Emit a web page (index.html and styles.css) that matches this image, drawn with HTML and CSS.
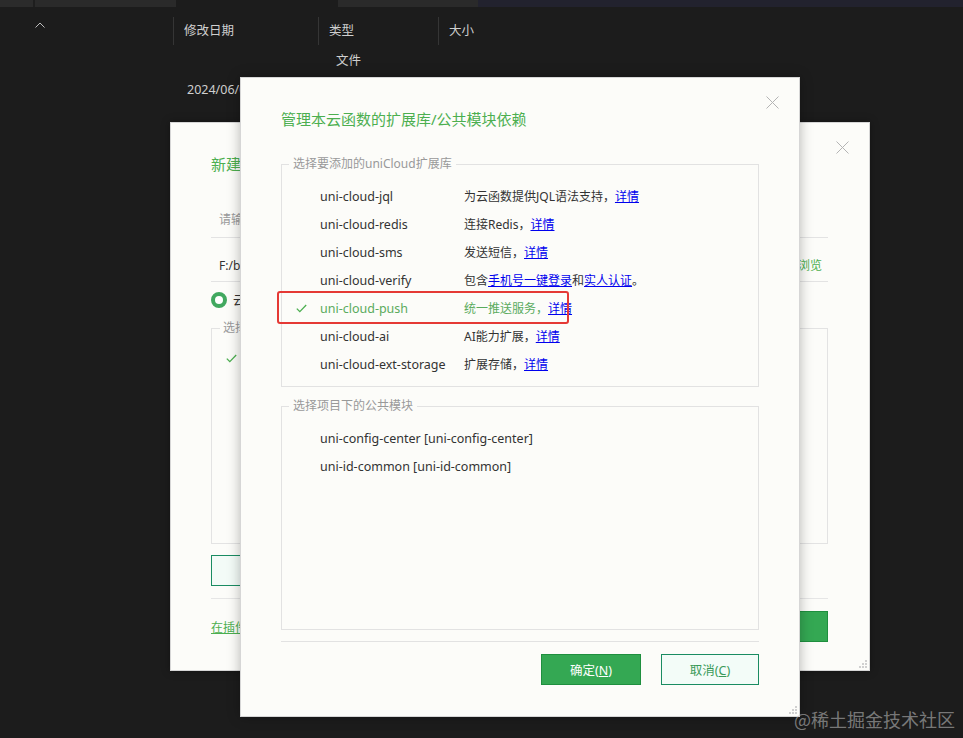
FILE: index.html
```html
<!DOCTYPE html>
<html lang="zh-CN">
<head>
<meta charset="utf-8">
<title>管理本云函数的扩展库/公共模块依赖</title>
<link rel="stylesheet" href="styles.css">
</head>
<body>
<div class="explorer">
  <div class="topbar">
    <span class="seg s1"></span><span class="seg s2"></span><span class="seg s3"></span><span class="seg s4"></span><span class="seg s5"></span>
  </div>
  <div class="colhead">
    <div class="caret-cell">
      <svg class="caret" width="10" height="6" viewBox="0 0 10 6"><polyline points="0.5,5.5 5,1 9.5,5.5" fill="none" stroke="#bdbdbd" stroke-width="1"/></svg>
    </div>
    <div class="col c-date">修改日期</div>
    <div class="col c-type">类型</div>
    <div class="col c-size">大小</div>
  </div>
  <div class="frow first">
    <div class="fcell f-name"></div>
    <div class="fcell f-date"></div>
    <div class="fcell f-type">文件</div>
  </div>
  <div class="frow">
    <div class="fcell f-name"></div>
    <div class="fcell f-date">2024/06/05 10:21</div>
    <div class="fcell f-type">文件夹</div>
  </div>
</div>

<div class="window back">
  <div class="w-title">新建云函数/云对象</div>
  <div class="w-close"><svg width="13" height="13" viewBox="0 0 13 13"><path d="M0.5 0.5L12.5 12.5M12.5 0.5L0.5 12.5" stroke="#b4b4b4" stroke-width="1"/></svg></div>
  <div class="b-input">请输入云函数名称</div>
  <div class="b-path"><span>F:/base/uniCloud-aliyun/cloudfunctions</span><span class="b-browse">浏览</span></div>
  <div class="b-radio"><span class="radio"></span><span>云函数</span></div>
  <fieldset class="b-field">
    <legend>选择要添加的uniCloud扩展库</legend>
    <div class="b-check"><svg width="11" height="9" viewBox="0 0 11 9"><polyline points="0.8,4.6 3.8,7.6 10.2,1" fill="none" stroke="#4caf50" stroke-width="1.3"/></svg></div>
  </fieldset>
  <div class="b-btnrow"><span class="b-outline"></span></div>
  <div class="b-sep"></div>
  <div class="b-foot"><span class="b-link">在插件市场下载云函数模板</span><span class="b-ok">创建</span></div>
  <svg class="grip" width="8" height="8" viewBox="0 0 8 8"><rect x="6" y="0" width="2" height="2" fill="#d0d0d0"/><rect x="3" y="3" width="2" height="2" fill="#d0d0d0"/><rect x="6" y="3" width="2" height="2" fill="#d0d0d0"/><rect x="0" y="6" width="2" height="2" fill="#d0d0d0"/><rect x="3" y="6" width="2" height="2" fill="#d0d0d0"/><rect x="6" y="6" width="2" height="2" fill="#d0d0d0"/></svg>
</div>

<div class="window front">
  <div class="w-title">管理本云函数的扩展库/公共模块依赖</div>
  <div class="w-close"><svg width="13" height="13" viewBox="0 0 13 13"><path d="M0.5 0.5L12.5 12.5M12.5 0.5L0.5 12.5" stroke="#b4b4b4" stroke-width="1"/></svg></div>

  <fieldset class="group g1">
    <legend>选择要添加的uniCloud扩展库</legend>
    <div class="rows">
      <div class="row"><span class="chk"></span><span class="name">uni-cloud-jql</span><span class="desc">为云函数提供JQL语法支持，<a class="lk">详情</a></span></div>
      <div class="row"><span class="chk"></span><span class="name">uni-cloud-redis</span><span class="desc">连接Redis，<a class="lk">详情</a></span></div>
      <div class="row"><span class="chk"></span><span class="name">uni-cloud-sms</span><span class="desc">发送短信，<a class="lk">详情</a></span></div>
      <div class="row"><span class="chk"></span><span class="name">uni-cloud-verify</span><span class="desc">包含<a class="lk">手机号一键登录</a>和<a class="lk">实人认证</a>。</span></div>
      <div class="row on">
        <span class="chk"><svg width="11" height="9" viewBox="0 0 11 9"><polyline points="0.8,4.6 3.8,7.6 10.2,1" fill="none" stroke="#4caf50" stroke-width="1.3"/></svg></span>
        <span class="name">uni-cloud-push</span><span class="desc">统一推送服务，<a class="lk">详情</a></span>
        <span class="mark"></span>
      </div>
      <div class="row"><span class="chk"></span><span class="name">uni-cloud-ai</span><span class="desc">AI能力扩展，<a class="lk">详情</a></span></div>
      <div class="row"><span class="chk"></span><span class="name">uni-cloud-ext-storage</span><span class="desc">扩展存储，<a class="lk">详情</a></span></div>
    </div>
  </fieldset>

  <fieldset class="group g2">
    <legend>选择项目下的公共模块</legend>
    <div class="rows tall">
      <div class="row"><span class="chk"></span><span class="name wide">uni-config-center [uni-config-center]</span></div>
      <div class="row"><span class="chk"></span><span class="name wide">uni-id-common [uni-id-common]</span></div>
    </div>
  </fieldset>

  <div class="sep"></div>
  <div class="btns">
    <button class="btn ok">确定(<u>N</u>)</button>
    <button class="btn cancel">取消(<u>C</u>)</button>
  </div>
  <svg class="grip" width="8" height="8" viewBox="0 0 8 8"><rect x="6" y="0" width="2" height="2" fill="#d0d0d0"/><rect x="3" y="3" width="2" height="2" fill="#d0d0d0"/><rect x="6" y="3" width="2" height="2" fill="#d0d0d0"/><rect x="0" y="6" width="2" height="2" fill="#d0d0d0"/><rect x="3" y="6" width="2" height="2" fill="#d0d0d0"/><rect x="6" y="6" width="2" height="2" fill="#d0d0d0"/></svg>
</div>

<div class="watermark">@稀土掘金技术社区</div>
</body>
</html>
```
FILE: styles.css
```css
html, body {
  margin: 0;
  padding: 0;
}
body {
  width: 963px;
  height: 738px;
  overflow: hidden;
  position: relative;
  background: #1c1c1c;
  font-family: "Noto Sans", "Noto Sans CJK SC", sans-serif;
  font-size: 12px;
  color: #333;
}

/* ---------- explorer background ---------- */
.explorer {
  color: #cfcfcf;
}
.topbar {
  display: flex;
  height: 7px;
  background: #22222e;
}
.seg { display: block; height: 7px; }
.s1 { width: 33px; background: #2b2b2b; }
.s2 { width: 2px; background: #1e1e1e; }
.s3 { width: 141px; background: #2a2a2a; }
.s4 { width: 162px; background: #1c1c1c; }
.s5 { width: 140px; background: #2a2a2a; }

.colhead {
  display: flex;
  padding-top: 10px;
  height: 28px;
}
.caret-cell {
  width: 173px;
}
.caret {
  display: block;
  margin: 5px 0 0 35px;
}
.col {
  border-left: 1px solid #353535;
  height: 28px;
  line-height: 28px;
  padding-left: 10px;
  box-sizing: border-box;
  font-size: 12.5px;
}
.c-date { width: 145px; }
.c-type { width: 120px; }
.c-size { width: 120px; }

.frow {
  display: flex;
  height: 30px;
  line-height: 30px;
  font-size: 12.5px;
}
.frow.first {
  margin-top: 2px;
  height: 28px;
  line-height: 28px;
}
.f-name { width: 187px; }
.f-date { width: 149px; }
.f-type { width: 120px; }

/* ---------- windows ---------- */
.window {
  position: absolute;
  box-sizing: border-box;
  background: #fcfcf9;
  border: 1px solid #d6d6d6;
}
.w-title {
  font-size: 15px;
  line-height: 20px;
  color: #4caf50;
}
.w-close {
  position: absolute;
  top: 18px;
  right: 20px;
  width: 13px;
  height: 13px;
}
.w-close svg { display: block; }
.grip {
  position: absolute;
  right: 2px;
  bottom: 2px;
}

/* back window */
.back {
  left: 170px;
  top: 122px;
  width: 700px;
  height: 549px;
  padding: 31px 41px 0 40px;
  box-shadow: 0 0 8px rgba(0,0,0,0.35);
}
.b-input {
  margin-top: 28px;
  height: 35px;
  line-height: 35px;
  padding-left: 8px;
  color: #999;
  border-bottom: 1px solid #e3e3e3;
}
.b-path {
  display: flex;
  justify-content: space-between;
  padding: 18px 6px 5px 8px;
  line-height: 20px;
  color: #333;
  border-bottom: 1px solid #e3e3e3;
}
.b-browse { color: #4caf50; }
.b-radio {
  display: flex;
  align-items: center;
  gap: 6px;
  margin-top: 9px;
  height: 18px;
}
.radio {
  width: 16px;
  height: 16px;
  border-radius: 50%;
  background: #41a85f;
  box-sizing: border-box;
  border: 4px solid #41a85f;
  position: relative;
}
.radio::after {
  content: "";
  position: absolute;
  left: 0; top: 0;
  width: 8px; height: 8px;
  border-radius: 50%;
  background: #fff;
}
.b-field {
  margin: 11px 0 0;
  padding: 18px 0 0 0;
  height: 224px;
  box-sizing: border-box;
  border: 1px solid #e3e3e3;
  min-width: 0;
}
.b-field legend {
  padding: 0 3px;
  margin-left: 8px;
  color: #999;
  line-height: 16px;
}
.b-check { padding-left: 14px; }
.b-check svg { display: block; }
.b-btnrow {
  margin-top: 11px;
  height: 31px;
}
.b-outline {
  display: block;
  width: 110px;
  height: 31px;
  box-sizing: border-box;
  border: 1px solid #1a8c62;
  background: #f3fbf7;
}
.b-sep {
  margin-top: 12px;
  border-top: 1px solid #e6e6e6;
}
.b-foot {
  display: flex;
  justify-content: space-between;
  align-items: center;
  margin-top: 12px;
}
.b-link {
  color: #4caf50;
  text-decoration: underline;
}
.b-ok {
  width: 100px;
  height: 31px;
  background: #34a853;
  border: 1px solid #1f8f3f;
  box-sizing: border-box;
  color: #fff;
  text-align: center;
  line-height: 29px;
}

/* front window */
.front {
  left: 240px;
  top: 77px;
  width: 560px;
  height: 640px;
  padding: 31px 40px 0 40px;
  box-shadow: 0 0 12px rgba(0,0,0,0.28);
}
.group {
  margin: 0;
  padding: 10px 0 8px 0;
  border: 1px solid #e2e2e2;
  min-width: 0;
}
.group legend {
  padding: 0 4px;
  margin-left: 7px;
  color: #999;
  line-height: 16px;
  font-size: 12px;
}
.g1 { margin-top: 27px; }
.g2 { margin-top: 11px; padding-bottom: 0; }
.rows.tall { height: 205px; }
.row {
  display: flex;
  align-items: center;
  height: 28px;
  position: relative;
  font-size: 12.5px;
  color: #333;
}
.chk {
  width: 38px;
  display: flex;
  justify-content: center;
  padding-left: 1px;
  box-sizing: border-box;
}
.chk svg { display: block; }
.name { width: 144px; white-space: nowrap; }
.name.wide { width: auto; }
.desc { white-space: nowrap; font-size: 12px; }
.lk {
  color: #0000ee;
  text-decoration: underline;
  cursor: pointer;
}
.row.on .name,
.row.on .desc { color: #5aab5d; }
.mark {
  position: absolute;
  left: -5px;
  top: -3px;
  width: 292px;
  height: 33px;
  box-sizing: border-box;
  border: 2px solid #e53935;
  border-radius: 3px;
}
.sep {
  margin-top: 11px;
  border-top: 1px solid #e2e2e2;
}
.btns {
  display: flex;
  justify-content: flex-end;
  gap: 20px;
  margin-top: 12px;
}
.btn {
  height: 31px;
  box-sizing: border-box;
  font-family: "Noto Sans", "Noto Sans CJK SC", sans-serif;
  font-size: 12.5px;
  padding: 0;
  cursor: pointer;
}
.btn.ok {
  width: 100px;
  background: #34a853;
  border: 1px solid #1f8f3f;
  color: #fff;
}
.btn.cancel {
  width: 98px;
  background: #f3fcf8;
  border: 1px solid #1a8c62;
  color: #3a9a5a;
}

.watermark {
  position: absolute;
  right: 8px;
  bottom: 6px;
  font-size: 18px;
  color: rgba(200,200,200,0.55);
  font-family: "Noto Sans CJK SC", sans-serif;
}
```
